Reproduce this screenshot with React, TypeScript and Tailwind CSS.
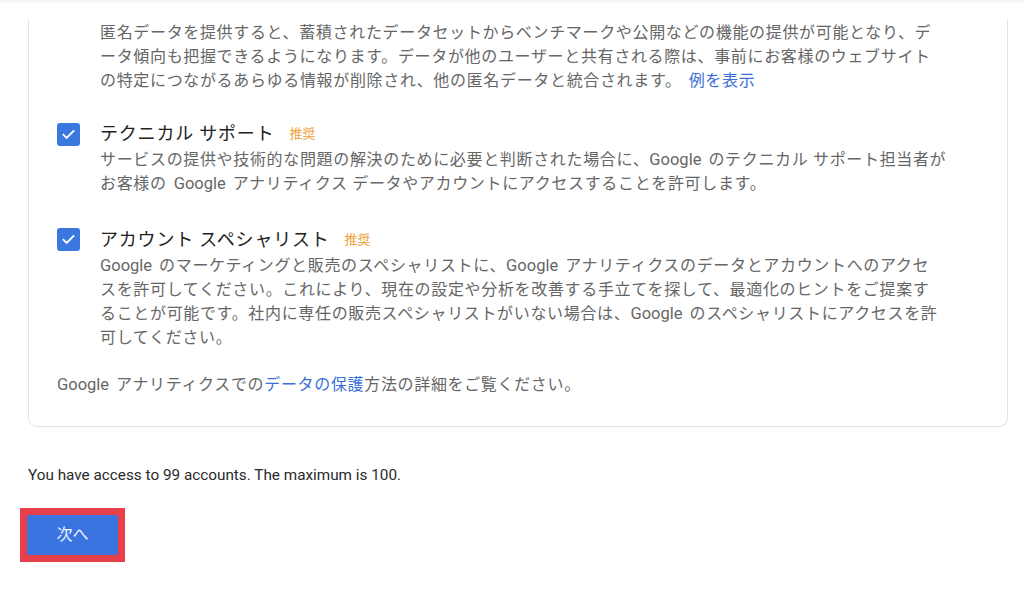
import React from "react";

const G = () => <span className="text-[16.5px] tracking-normal">Google</span>;
const Sp = () => <span className="inline-block w-[7px]" />;

const Line = ({ children }: { children: React.ReactNode }) => (
  <div className="h-[24px] leading-[24px] whitespace-nowrap">{children}</div>
);

const Check = () => (
  <div className="w-[23px] h-[23px] rounded-[3px] bg-[#3a78e0] flex items-center justify-center shrink-0">
    <svg width="15" height="15" viewBox="0 0 24 24" fill="none">
      <path d="M4 12.5l5 5L20 6.5" stroke="white" strokeWidth="3" strokeLinecap="square" />
    </svg>
  </div>
);

const Rec = () => (
  <span className="ml-[15px] text-[13px] tracking-normal text-[#eea23a]">推奨</span>
);

export default function App() {
  return (
    <div className="w-full h-[591px] bg-white font-[Roboto,'Noto_Sans_CJK_JP',sans-serif] overflow-hidden">
      <div className="h-[3px] bg-[#f6f6f6]" />
      <div className="ml-[28px] mr-[16px] mt-[17px] border-x border-b border-[#e3e3e3] rounded-b-[9px] pt-[1px] pb-[29px]">
        <div className="pl-[71px] text-[16px] tracking-[0.66px] text-[#666]">
          <Line>匿名データを提供すると、蓄積されたデータセットからベンチマークや公開などの機能の提供が可能となり、デ</Line>
          <Line>ータ傾向も把握できるようになります。データが他のユーザーと共有される際は、事前にお客様のウェブサイト</Line>
          <Line>
            の特定につながるあらゆる情報が削除され、他の匿名データと統合されます。<Sp />
            <span className="text-[#3a6fd8]">例を表示</span>
          </Line>
        </div>

        <div className="mt-[29px] pl-[28px] flex gap-[20px]">
          <div className="pt-[1px]">
            <Check />
          </div>
          <div className="flex flex-col">
            <div className="h-[24px] leading-[24px] whitespace-nowrap flex items-center">
              <span className="text-[18px] tracking-[0.8px] text-[#222]">テクニカル サポート</span>
              <Rec />
            </div>
            <div className="mt-[2px] text-[16px] tracking-[0.66px] text-[#666]">
              <Line>
                サービスの提供や技術的な問題の解決のために必要と判断された場合に、<G />
                <Sp />
                のテクニカル サポート担当者が
              </Line>
              <Line>
                お客様の<Sp />
                <G />
                <Sp />
                アナリティクス データやアカウントにアクセスすることを許可します。
              </Line>
            </div>
          </div>
        </div>

        <div className="mt-[32px] pl-[28px] flex gap-[20px]">
          <div>
            <Check />
          </div>
          <div className="flex flex-col">
            <div className="h-[24px] leading-[24px] whitespace-nowrap flex items-center">
              <span className="text-[18px] tracking-[0.8px] text-[#222]">アカウント スペシャリスト</span>
              <Rec />
            </div>
            <div className="mt-[2px] text-[16px] tracking-[0.66px] text-[#666]">
              <Line>
                <G />
                <Sp />
                のマーケティングと販売のスペシャリストに、<G />
                <Sp />
                アナリティクスのデータとアカウントへのアクセ
              </Line>
              <Line>スを許可してください。これにより、現在の設定や分析を改善する手立てを探して、最適化のヒントをご提案す</Line>
              <Line>
                ることが可能です。社内に専任の販売スペシャリストがいない場合は、<G />
                <Sp />
                のスペシャリストにアクセスを許
              </Line>
              <Line>可してください。</Line>
            </div>
          </div>
        </div>

        <div className="mt-[23px] pl-[28px] text-[16px] tracking-[0.66px] text-[#666]">
          <Line>
            <G />
            <Sp />
            アナリティクスでの<span className="text-[#3a6fd8]">データの保護</span>方法の詳細をご覧ください。
          </Line>
        </div>
      </div>

      <div className="ml-[28px] mt-[38px] h-[20px] leading-[20px] text-[15.3px] text-[#2a2a2a]">
        You have access to 99 accounts. The maximum is 100.
      </div>

      <div className="ml-[20px] mt-[23px] w-[105px] h-[54px] bg-[#e8404a] p-[7px]">
        <div className="w-[91px] h-[40px] bg-[#3a74e0] rounded-[2px] flex items-center justify-center text-[16px] text-[#eef3fd]">
          次へ
        </div>
      </div>
    </div>
  );
}
